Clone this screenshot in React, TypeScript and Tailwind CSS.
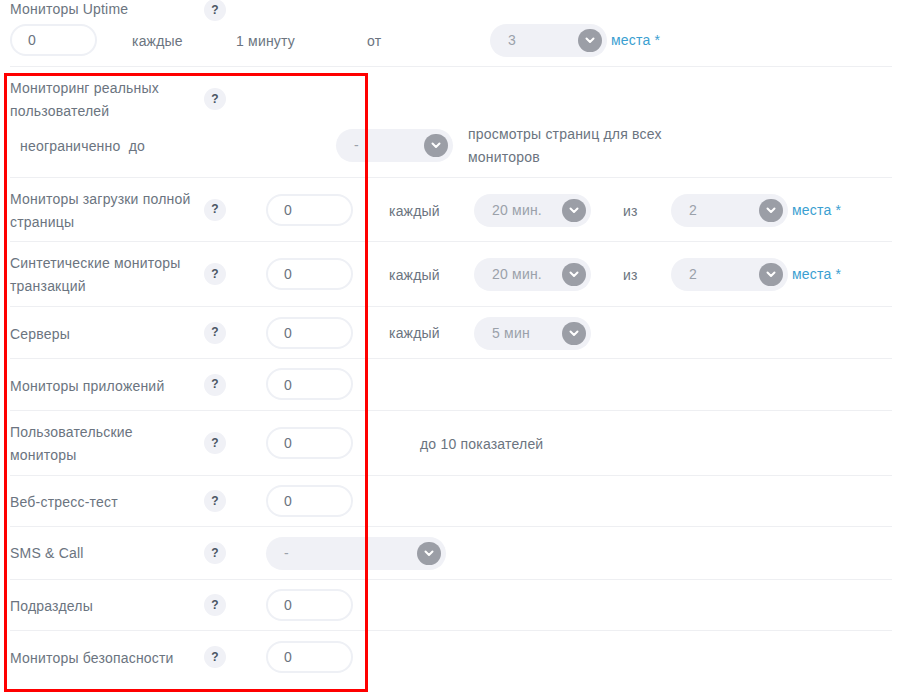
import React from "react";

const Help = () => (
  <span className="flex h-[22px] w-[22px] shrink-0 items-center justify-center rounded-full bg-[#f0f1f6] text-[12px] font-bold tracking-normal text-[#4b5563]">?</span>
);

const Num = ({ className = "", low = false }: { className?: string; low?: boolean }) => (
  <div className={`flex h-[32px] w-[87px] shrink-0 items-center rounded-full border-2 border-[#eef0f5] bg-white pl-[16px] text-[14px] text-[#6b7480] ${low ? "pt-[2px]" : ""} ${className}`}>0</div>
);

const Select = ({ value, width, className = "" }: { value: string; width: string; className?: string }) => (
  <div className={`flex h-[33px] shrink-0 items-center justify-between rounded-full bg-[#f0f1f6] pl-[18px] pr-[5px] text-[14px] text-[#9ba1aa] ${width} ${className}`}>
    <span>{value}</span>
    <span className="flex h-[23px] w-[24px] items-center justify-center rounded-full bg-[#9b9ea6]">
      <svg width="10" height="7" viewBox="0 0 10 7" fill="none" stroke="white" strokeWidth="2" strokeLinecap="round" strokeLinejoin="round"><path d="M1.5 1.5 5 5l3.5-3.5" /></svg>
    </span>
  </div>
);

const Label = ({ children, className = "" }: { children: React.ReactNode; className?: string }) => (
  <div className={`w-[194px] shrink-0 pr-[3px] text-[#6b7480] ${className}`}>{children}</div>
);

const Row = ({ h, children, last = false }: { h: string; children: React.ReactNode; last?: boolean }) => (
  <div className={`flex items-center ${h} ${last ? "" : "border-b border-[#eeeff2]"}`}>{children}</div>
);

export default function App() {
  return (
    <div className="relative h-[697px] w-[903px] overflow-hidden bg-white text-[14px] leading-[23px] tracking-[0.2px]" style={{ fontFamily: '"Liberation Sans", Arial, sans-serif' }}>
      <div className="ml-[10px] w-[882px]">
        <div className="h-[67px] border-b border-[#eeeff2]">
          <div className="flex h-[24px] items-center">
            <Label className="-mt-[6px]">Мониторы Uptime</Label>
            <div className="-mt-[4px]"><Help /></div>
          </div>
          <div className="flex h-[32px] items-center text-[#6b7480]">
            <Num />
            <span className="ml-[35px] mt-[2px] w-[104px] shrink-0">каждые</span>
            <span className="mt-[2px] w-[131px] shrink-0">1 минуту</span>
            <span className="mt-[2px] w-[123px] shrink-0">от</span>
            <Select value="3" width="w-[117px]" />
            <span className="ml-[4px] text-[#3b9fd1]">места *</span>
          </div>
        </div>

        <div className="h-[111px] border-b border-[#eeeff2] pt-[9px]">
          <div className="flex h-[46px] items-center">
            <Label className="mt-[2px]">Мониторинг реальных пользователей</Label>
            <Help />
          </div>
          <div className="flex items-start text-[#6b7480]">
            <span className="ml-[10px] mt-[13px] w-[316px] shrink-0 whitespace-pre">неограниченно  до</span>
            <Select value="-" width="w-[117px]" className="mt-[7px]" />
            <span className="ml-[15px] mt-[1px] w-[220px]">просмотры страниц для всех мониторов</span>
          </div>
        </div>

        <Row h="h-[64px]">
          <Label className="mt-[2px]">Мониторы загрузки полной страницы</Label><Help />
          <Num className="ml-[40px]" low />
          <span className="ml-[36px] mt-[3px] w-[85px] shrink-0 text-[#6b7480]">каждый</span>
          <Select value="20 мин." width="w-[117px]" className="mt-[2px]" />
          <span className="ml-[32px] mt-[3px] w-[48px] shrink-0 text-[#6b7480]">из</span>
          <Select value="2" width="w-[117px]" className="mt-[2px]" />
          <span className="ml-[4px] mt-[2px] text-[#3b9fd1]">места *</span>
        </Row>
        <Row h="h-[65px]">
          <Label className="mt-[2px]">Синтетические мониторы транзакций</Label><Help />
          <Num className="ml-[40px]" />
          <span className="ml-[36px] mt-[2px] w-[85px] shrink-0 text-[#6b7480]">каждый</span>
          <Select value="20 мин." width="w-[117px]" />
          <span className="ml-[32px] mt-[2px] w-[48px] shrink-0 text-[#6b7480]">из</span>
          <Select value="2" width="w-[117px]" />
          <span className="ml-[4px] text-[#3b9fd1]">места *</span>
        </Row>
        <Row h="h-[52px]">
          <Label className="mt-[4px]">Серверы</Label><Help />
          <Num className="ml-[40px]" low />
          <span className="ml-[36px] mt-[2px] w-[85px] shrink-0 text-[#6b7480]">каждый</span>
          <Select value="5 мин" width="w-[117px]" className="mt-[2px]" />
        </Row>
        <Row h="h-[52px]">
          <Label className="mt-[4px]">Мониторы приложений</Label><Help />
          <Num className="ml-[40px] -mt-[1px]" low />
        </Row>
        <Row h="h-[65px]">
          <Label className="mt-[2px]">Пользовательские мониторы</Label><Help />
          <Num className="ml-[40px] -mt-[1px]" low />
          <span className="ml-[67px] mt-[2px] text-[#6b7480]">до 10 показателей</span>
        </Row>
        <Row h="h-[51px]">
          <Label className="mt-[2px]">Веб-стресс-тест</Label><Help />
          <Num className="ml-[40px]" />
        </Row>
        <Row h="h-[53px]">
          <Label>SMS &amp; Call</Label><Help />
          <Select value="-" width="w-[180px]" className="ml-[40px]" />
        </Row>
        <Row h="h-[51px]">
          <Label className="mt-[2px]">Подразделы</Label><Help />
          <Num className="ml-[40px]" />
        </Row>
        <Row h="h-[54px]" last>
          <Label>Мониторы безопасности</Label>
          <div className="-mt-[2px]"><Help /></div>
          <Num className="ml-[40px] -mt-[3px]" low />
        </Row>
      </div>
      <div className="pointer-events-none absolute left-[4px] top-[73px] h-[619px] w-[364px] border-[3px] border-[#ff0000]" />
    </div>
  );
}
